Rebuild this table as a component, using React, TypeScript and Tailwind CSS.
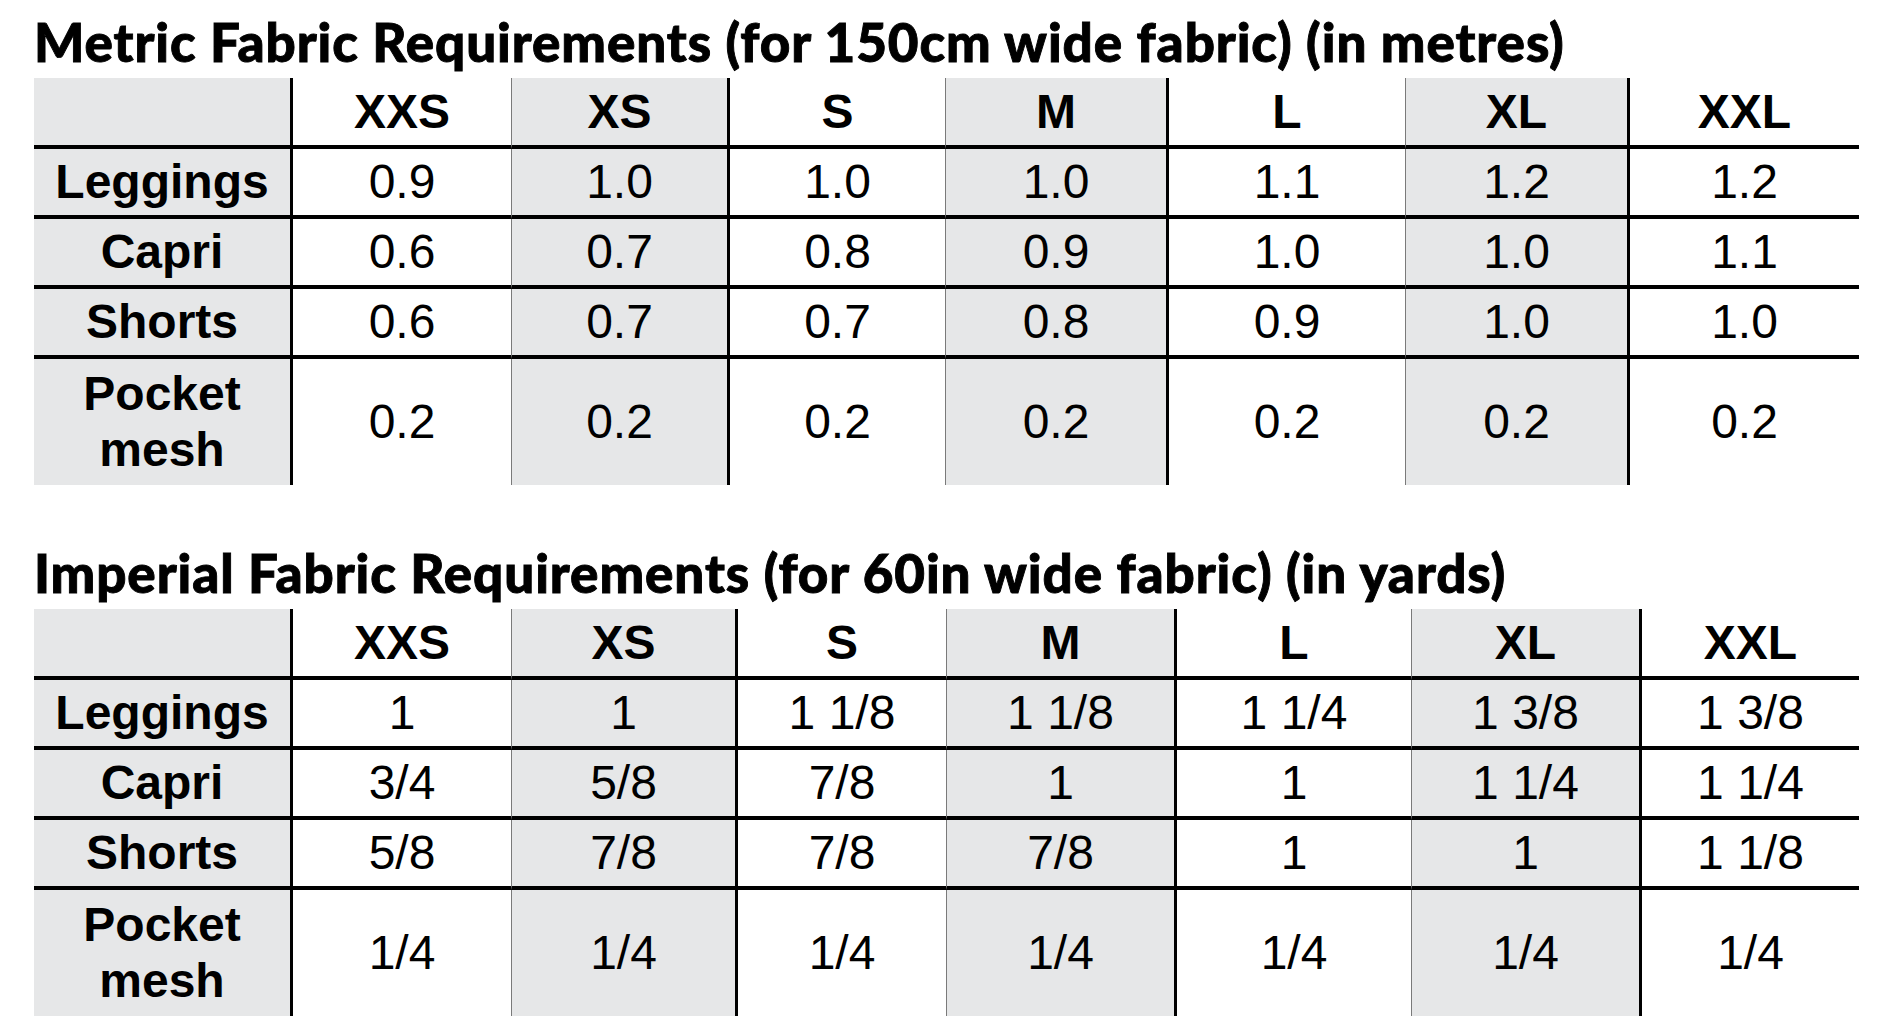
import React from 'react';

// Column look: label, XXS, XS, S, M, L, XL, XXL
const colBg = [
    'bg-[#e6e7e8]',
    'bg-white',
    'bg-[#e6e7e8]',
    'bg-white',
    'bg-[#e6e7e8]',
    'bg-white',
    'bg-[#e6e7e8]',
    'bg-white',
];

const colBorder = [
    'border-r-[3px] border-r-black',
    'border-r border-r-[#7a7a7a]',
    'border-r-[3px] border-r-black',
    'border-r border-r-[#7a7a7a]',
    'border-r-[3px] border-r-black',
    'border-r border-r-[#7a7a7a]',
    'border-r-[3px] border-r-black',
    '',
];

const sizes = ['XXS', 'XS', 'S', 'M', 'L', 'XL', 'XXL'];

interface Row {
    label: string[];
    values: string[];
}

const metricRows: Row[] = [
    { label: ['Leggings'], values: ['0.9', '1.0', '1.0', '1.0', '1.1', '1.2', '1.2'] },
    { label: ['Capri'], values: ['0.6', '0.7', '0.8', '0.9', '1.0', '1.0', '1.1'] },
    { label: ['Shorts'], values: ['0.6', '0.7', '0.7', '0.8', '0.9', '1.0', '1.0'] },
    { label: ['Pocket', 'mesh'], values: ['0.2', '0.2', '0.2', '0.2', '0.2', '0.2', '0.2'] },
];

const imperialRows: Row[] = [
    { label: ['Leggings'], values: ['1', '1', '1 1/8', '1 1/8', '1 1/4', '1 3/8', '1 3/8'] },
    { label: ['Capri'], values: ['3/4', '5/8', '7/8', '1', '1', '1 1/4', '1 1/4'] },
    { label: ['Shorts'], values: ['5/8', '7/8', '7/8', '7/8', '1', '1', '1 1/8'] },
    { label: ['Pocket', 'mesh'], values: ['1/4', '1/4', '1/4', '1/4', '1/4', '1/4', '1/4'] },
];

function FabricTable({ cols, rows }: { cols: string; rows: Row[] }) {
    return (
        <div className={`grid w-[1825px] ${cols} font-['Liberation_Sans',Arial,sans-serif] text-[48px] text-black`}>
            {/* Kepala tabel */}
            {[''].concat(sizes).map((s, i) => (
                <div
                    key={'h' + i}
                    className={`flex h-[71px] items-center justify-center border-b-4 border-b-black font-bold leading-none ${colBg[i]} ${colBorder[i]}`}
                >
                    {s}
                </div>
            ))}

            {rows.map((row, r) => {
                const last = r === rows.length - 1;
                const rowCls = last ? 'h-[126px]' : 'h-[70px] border-b-4 border-b-black';
                return (
                    <React.Fragment key={r}>
                        <div className={`flex flex-col items-center justify-center font-bold leading-[56px] ${rowCls} ${colBg[0]} ${colBorder[0]}`}>
                            {row.label.map(l => (
                                <span key={l}>{l}</span>
                            ))}
                        </div>
                        {row.values.map((v, c) => (
                            <div
                                key={c}
                                className={`flex items-center justify-center leading-none ${rowCls} ${colBg[c + 1]} ${colBorder[c + 1]}`}
                            >
                                {v}
                            </div>
                        ))}
                    </React.Fragment>
                );
            })}
        </div>
    );
}

export default function App() {
    return (
        <div className="min-h-[1036px] w-[1900px] bg-white pl-[34px] pt-[16px]">
            <h2 className="mb-[10px] font-['Lato',sans-serif] text-[53px] font-black leading-[52px] tracking-[0.9px] text-black [-webkit-text-stroke:0.9px_black]">
                Metric Fabric Requirements (for 150cm wide fabric) (in metres)
            </h2>
            <FabricTable cols="grid-cols-[259px_219px_218px_216px_223px_237px_224px_229px]" rows={metricRows} />

            <h2 className="mb-[10px] mt-[62px] font-['Lato',sans-serif] text-[53px] font-black leading-[52px] tracking-[0.9px] text-black [-webkit-text-stroke:0.9px_black]">
                Imperial Fabric Requirements (for 60in wide fabric) (in yards)
            </h2>
            <FabricTable cols="grid-cols-[259px_219px_226px_209px_230px_235px_230px_217px]" rows={imperialRows} />
        </div>
    );
}
